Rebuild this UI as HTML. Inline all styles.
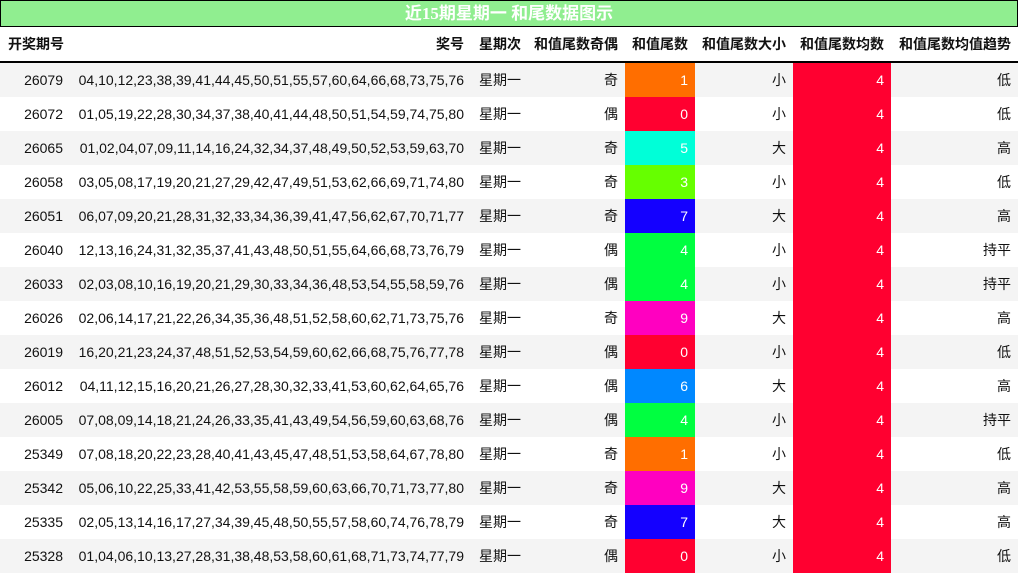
<!DOCTYPE html>
<html><head><meta charset="utf-8"><style>
body{margin:0;width:1018px;height:574px;overflow:hidden;background:#fff;font-family:"Liberation Sans","Noto Sans CJK SC",sans-serif;font-size:14px;color:#111}
.t{background:#90ee90;border:1px solid #000;color:#fff;font-weight:bold;font-size:17px;text-align:center;line-height:25px;box-sizing:border-box;height:27px;font-family:"Liberation Serif","Noto Sans CJK SC",serif}
table{border-collapse:collapse;table-layout:fixed;width:1018px}
td,th{padding:0 7px 0 0;text-align:right;white-space:nowrap;overflow:hidden}
th{height:34px;font-weight:bold;border-bottom:2px solid #000}
th:first-child{text-align:left;padding-left:8px}
td{height:34px}
tr:nth-child(odd) td{background:#f4f4f4}
tr td.c{color:#fff}
</style></head><body>
<div class="t">近15期星期一 和尾数据图示</div>
<table>
<colgroup><col style="width:70px"><col style="width:401px"><col style="width:57px"><col style="width:97px"><col style="width:70px"><col style="width:98px"><col style="width:98px"><col style="width:127px"></colgroup>
<thead><tr><th>开奖期号</th><th>奖号</th><th>星期次</th><th>和值尾数奇偶</th><th>和值尾数</th><th>和值尾数大小</th><th>和值尾数均数</th><th>和值尾数均值趋势</th></tr></thead>
<tbody>
<tr><td>26079</td><td>04,10,12,23,38,39,41,44,45,50,51,55,57,60,64,66,68,73,75,76</td><td>星期一</td><td>奇</td><td class="c" style="background:#ff6e00">1</td><td>小</td><td class="c" style="background:#ff0030">4</td><td>低</td></tr>
<tr><td>26072</td><td>01,05,19,22,28,30,34,37,38,40,41,44,48,50,51,54,59,74,75,80</td><td>星期一</td><td>偶</td><td class="c" style="background:#ff0030">0</td><td>小</td><td class="c" style="background:#ff0030">4</td><td>低</td></tr>
<tr><td>26065</td><td>01,02,04,07,09,11,14,16,24,32,34,37,48,49,50,52,53,59,63,70</td><td>星期一</td><td>奇</td><td class="c" style="background:#00ffd8">5</td><td>大</td><td class="c" style="background:#ff0030">4</td><td>高</td></tr>
<tr><td>26058</td><td>03,05,08,17,19,20,21,27,29,42,47,49,51,53,62,66,69,71,74,80</td><td>星期一</td><td>奇</td><td class="c" style="background:#66ff00">3</td><td>小</td><td class="c" style="background:#ff0030">4</td><td>低</td></tr>
<tr><td>26051</td><td>06,07,09,20,21,28,31,32,33,34,36,39,41,47,56,62,67,70,71,77</td><td>星期一</td><td>奇</td><td class="c" style="background:#1400ff">7</td><td>大</td><td class="c" style="background:#ff0030">4</td><td>高</td></tr>
<tr><td>26040</td><td>12,13,16,24,31,32,35,37,41,43,48,50,51,55,64,66,68,73,76,79</td><td>星期一</td><td>偶</td><td class="c" style="background:#00ff40">4</td><td>小</td><td class="c" style="background:#ff0030">4</td><td>持平</td></tr>
<tr><td>26033</td><td>02,03,08,10,16,19,20,21,29,30,33,34,36,48,53,54,55,58,59,76</td><td>星期一</td><td>偶</td><td class="c" style="background:#00ff40">4</td><td>小</td><td class="c" style="background:#ff0030">4</td><td>持平</td></tr>
<tr><td>26026</td><td>02,06,14,17,21,22,26,34,35,36,48,51,52,58,60,62,71,73,75,76</td><td>星期一</td><td>奇</td><td class="c" style="background:#ff00c0">9</td><td>大</td><td class="c" style="background:#ff0030">4</td><td>高</td></tr>
<tr><td>26019</td><td>16,20,21,23,24,37,48,51,52,53,54,59,60,62,66,68,75,76,77,78</td><td>星期一</td><td>偶</td><td class="c" style="background:#ff0030">0</td><td>小</td><td class="c" style="background:#ff0030">4</td><td>低</td></tr>
<tr><td>26012</td><td>04,11,12,15,16,20,21,26,27,28,30,32,33,41,53,60,62,64,65,76</td><td>星期一</td><td>偶</td><td class="c" style="background:#0088ff">6</td><td>大</td><td class="c" style="background:#ff0030">4</td><td>高</td></tr>
<tr><td>26005</td><td>07,08,09,14,18,21,24,26,33,35,41,43,49,54,56,59,60,63,68,76</td><td>星期一</td><td>偶</td><td class="c" style="background:#00ff40">4</td><td>小</td><td class="c" style="background:#ff0030">4</td><td>持平</td></tr>
<tr><td>25349</td><td>07,08,18,20,22,23,28,40,41,43,45,47,48,51,53,58,64,67,78,80</td><td>星期一</td><td>奇</td><td class="c" style="background:#ff6e00">1</td><td>小</td><td class="c" style="background:#ff0030">4</td><td>低</td></tr>
<tr><td>25342</td><td>05,06,10,22,25,33,41,42,53,55,58,59,60,63,66,70,71,73,77,80</td><td>星期一</td><td>奇</td><td class="c" style="background:#ff00c0">9</td><td>大</td><td class="c" style="background:#ff0030">4</td><td>高</td></tr>
<tr><td>25335</td><td>02,05,13,14,16,17,27,34,39,45,48,50,55,57,58,60,74,76,78,79</td><td>星期一</td><td>奇</td><td class="c" style="background:#1400ff">7</td><td>大</td><td class="c" style="background:#ff0030">4</td><td>高</td></tr>
<tr><td>25328</td><td>01,04,06,10,13,27,28,31,38,48,53,58,60,61,68,71,73,74,77,79</td><td>星期一</td><td>偶</td><td class="c" style="background:#ff0030">0</td><td>小</td><td class="c" style="background:#ff0030">4</td><td>低</td></tr>
</tbody></table>
</body></html>
